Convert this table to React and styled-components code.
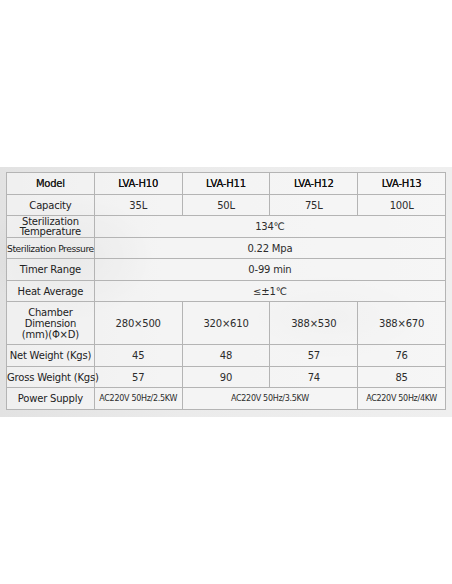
import React from "react";
import styled, { createGlobalStyle } from "styled-components";

const GlobalStyle = createGlobalStyle`
  html, body {
    margin: 0;
    padding: 0;
    background: #ffffff;
  }
`;

const Page = styled.div`
  min-height: 100vh;
  display: flex;
  align-items: center;
  justify-content: center;
  font-family: "DejaVu Sans", "Liberation Sans", sans-serif;
`;

const Panel = styled.div`
  width: 100%;
  padding: 5px 6px 7px;
  box-sizing: border-box;
  background:
    radial-gradient(ellipse 120px 90px at 70px 90px, rgba(0, 0, 0, 0.08), transparent 70%),
    radial-gradient(ellipse 140px 60px at 330px 150px, rgba(0, 0, 0, 0.04), transparent 70%),
    linear-gradient(90deg, #e2e2e2 0%, #ebebeb 40%, #efefef 100%);
`;

const Table = styled.table`
  width: 440px;
  border-collapse: collapse;
  table-layout: fixed;
  border: 1px solid #b4b4b4;
`;

const Row = styled.tr`
  height: ${(p) => (p.$tall ? "43px" : "21.5px")};
`;

const Cell = styled.td`
  border: 1px solid #b4b4b4;
  background: rgba(252, 252, 252, 0.55);
  text-align: center;
  vertical-align: middle;
  padding: 0;
  color: ${(p) => (p.$head ? "#111" : "#2c2c2c")};
  font-size: ${(p) => p.$size || "10px"};
  line-height: ${(p) => p.$lh || "11px"};
  letter-spacing: ${(p) => p.$ls || "-0.2px"};
  text-shadow: ${(p) => (p.$head ? "0 0 0.4px #222" : "none")};
  white-space: nowrap;
`;

const Label = styled(Cell)`
  color: #222;
`;

const rows = [
  { label: "Model", head: true, cells: ["LVA-H10", "LVA-H11", "LVA-H12", "LVA-H13"] },
  { label: "Capacity", cells: ["35L", "50L", "75L", "100L"] },
  { label: ["Sterilization", "Temperature"], lh: "10px", span: "134℃" },
  { label: "Sterilization Pressure", ls: "-0.45px", size: "9.2px", span: "0.22 Mpa" },
  { label: "Timer Range", span: "0-99 min" },
  { label: "Heat Average", span: "≤±1℃" },
  {
    label: ["Chamber", "Dimension", "(mm)(Φ×D)"],
    tall: true,
    cells: ["280×500", "320×610", "388×530", "388×670"],
  },
  { label: "Net Weight (Kgs)", cells: ["45", "48", "57", "76"] },
  { label: "Gross Weight (Kgs)", cells: ["57", "90", "74", "85"] },
];

function Lines({ text }) {
  if (!Array.isArray(text)) return text;
  return text.map((t, i) => (
    <React.Fragment key={i}>
      {i > 0 && <br />}
      {t}
    </React.Fragment>
  ));
}

export default function App() {
  return (
    <Page>
      <GlobalStyle />
      <Panel>
        <Table>
          <tbody>
            {rows.map((r, i) => (
              <Row key={i} $tall={r.tall}>
                <Label $lh={r.lh} $ls={r.ls} $size={r.size} $head={r.head}>
                  <Lines text={r.label} />
                </Label>
                {r.span ? (
                  <Cell colSpan={4}>{r.span}</Cell>
                ) : (
                  r.cells.map((c, j) => (
                    <Cell key={j} $head={r.head}>
                      {c}
                    </Cell>
                  ))
                )}
              </Row>
            ))}
            <Row>
              <Label>Power Supply</Label>
              <Cell $size="8px" $ls="-0.3px">AC220V 50Hz/2.5KW</Cell>
              <Cell colSpan={2} $size="8px" $ls="-0.3px">
                AC220V 50Hz/3.5KW
              </Cell>
              <Cell $size="8px" $ls="-0.3px">AC220V 50Hz/4KW</Cell>
            </Row>
          </tbody>
        </Table>
      </Panel>
    </Page>
  );
}
